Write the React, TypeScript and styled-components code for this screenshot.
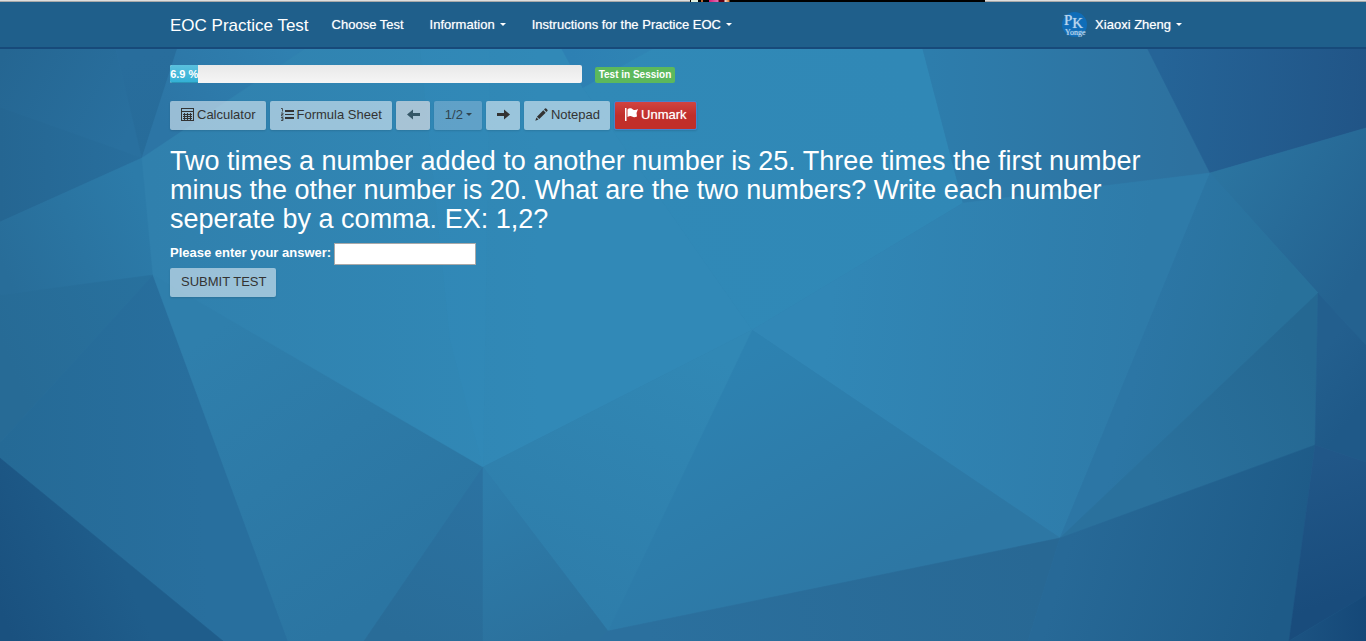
import React from 'react';
import styled, { createGlobalStyle, css } from 'styled-components';

const GlobalStyle = createGlobalStyle`
  *, *::before, *::after { box-sizing: border-box; }
  body {
    margin: 0;
    background: #2b76a5;
    color: #fff;
    font: 13px/18px "Liberation Sans", Arial, sans-serif;
  }
`;

const Page = styled.div`
  position: relative;
  isolation: isolate;
  min-height: 100vh;
`;

const Backdrop = styled.svg`
  position: absolute;
  inset: 0;
  z-index: -1;
  width: 100%;
  height: 100%;
`;

const TopEdge = styled.div`
  height: 2px;
  background: linear-gradient(#dedede 50%, #a9a9a9 50%);
`;

const TabStrip = styled.div`
  width: 295px;
  height: 2px;
  margin-left: 690px;
  background: linear-gradient(
    90deg,
    #000 1px, #dfeedd 1px, #dfeedd 8px, #000 8px, #000 11px, #b8662e 11px, #b8662e 13px,
    #000 13px, #000 19px, #d81b72 19px, #e56bb4 28px, #640010 29px, #640010 34px,
    #f4e6e0 35px, #e2762c 39px, #000 40px
  );
`;

const Navbar = styled.header`
  background: #1f5f8b;
  border-bottom: 2px solid #174a7a;
`;

const Container = styled.div`
  max-width: 1026px;
  margin: 0 auto;
`;

const NavRow = styled(Container)`
  display: flex;
  align-items: center;
  height: 45px;
`;

const NavLink = styled.a`
  display: flex;
  align-items: center;
  gap: 5px;
  margin-right: 26px;
  color: #fff;
  text-decoration: none;
  white-space: nowrap;
  text-shadow: 0 0 1px rgba(255, 255, 255, 0.6);
`;

const Brand = styled(NavLink)`
  margin-right: 23px;
  padding-top: 2px;
  font-size: 17px;
  line-height: 20px;
  text-shadow: none;
`;

const UserLink = styled(NavLink)`
  margin-left: auto;
  margin-right: 14px;
`;

const Avatar = styled.svg`
  width: 25px;
  height: 25px;
  margin-right: 3px;
`;

const Caret = styled.span`
  border: 3px solid transparent;
  border-top-color: currentColor;
  border-bottom: 0;
`;

const Main = styled(Container).attrs({ as: 'main' })`
  padding-top: 16px;
`;

const StatusRow = styled.div`
  display: flex;
  align-items: flex-start;
  gap: 13px;
  margin-bottom: 18px;
`;

const Progress = styled.div`
  width: 412px;
  height: 18px;
  border-radius: 2px;
  overflow: hidden;
  background: linear-gradient(#e9e9e9, #f5f5f5);
`;

const ProgressFill = styled.div`
  height: 100%;
  background: linear-gradient(#5bc0de, #31b0d5);
  box-shadow: inset 0 -1px 0 rgba(0, 0, 0, 0.15);
  font-size: 11px;
  font-weight: bold;
  text-align: center;
  white-space: nowrap;
`;

const StatusLabel = styled.span`
  width: 80px;
  height: 16px;
  margin-top: 2px;
  border-radius: 2px;
  background: #5cb85c;
  font: bold 10px/16px "Liberation Sans", Arial, sans-serif;
  text-align: center;
  white-space: nowrap;
`;

const Toolbar = styled.div`
  display: flex;
  flex-wrap: wrap;
  gap: 4px;
  margin-bottom: 17px;
`;

type Tone = 'light' | 'muted' | 'dim' | 'danger';

const tones = {
  light: css`background: rgba(238, 245, 250, 0.56); color: #333;`,
  muted: css`background: rgba(225, 225, 230, 0.67); color: #355767;`,
  dim: css`background: rgba(180, 205, 230, 0.36); color: #30444f;`,
  danger: css`
    border-color: #4a80cc;
    background: linear-gradient(#d14340, #c12e2a 50%) padding-box;
    color: #fff;
    text-shadow: 0 0 1px rgba(255, 255, 255, 0.6);
  `,
};

const Button = styled.button<{ $tone?: Tone }>`
  display: inline-flex;
  align-items: center;
  gap: 3px;
  height: 29px;
  padding: 0 9px 2px 10px;
  border: 1px solid transparent;
  border-radius: 2px;
  box-shadow: 0 1px 2px rgba(0, 0, 0, 0.12);
  font: inherit;
  white-space: nowrap;
  cursor: pointer;
  ${({ $tone = 'light' }) => tones[$tone]}
`;

const Icon = styled.svg`
  width: 13px;
  height: 13px;
  fill: currentColor;
`;

const Question = styled.h1`
  margin: 0 0 9px;
  font-size: 27px;
  font-weight: normal;
  line-height: 29px;
`;

const AnswerRow = styled.div`
  display: flex;
  gap: 3px;
  margin-bottom: 3px;
`;

const AnswerLabel = styled.label`
  font-weight: bold;
  line-height: 20px;
`;

const AnswerInput = styled.input`
  width: 142px;
  height: 22px;
  padding: 1px 2px;
  border: 1px solid #a9a9a9;
  background: #fff;
  color: #333;
  font: inherit;
`;

type Stop = [number, number, string];
type Facet = { points: string; from: Stop; to: Stop };

const facets: Facet[] = [
  { points: '0,0 104,0 142,158 0,107', from: [0, 60, '#256692'], to: [130, 130, '#29709f'] },
  { points: '104,0 193,0 142,158', from: [120, 60, '#286d9c'], to: [142, 158, '#276c9a'] },
  { points: '193,0 378,0 142,158', from: [160, 120, '#2c75a5'], to: [290, 50, '#2f80b0'] },
  { points: '0,107 142,158 0,222', from: [0, 160, '#256692'], to: [142, 158, '#286f9e'] },
  { points: '0,222 142,158 153,275 0,295', from: [0, 260, '#286d99'], to: [145, 200, '#2c7ba9'] },
  { points: '0,295 153,275 0,443', from: [0, 340, '#276b96'], to: [150, 280, '#28719e'] },
  { points: '153,275 288,641 223,641 0,458 0,443', from: [0, 450, '#256a96'], to: [200, 440, '#286f9e'] },
  { points: '153,275 483,467 364,641 288,641', from: [200, 340, '#2f7fac'], to: [380, 600, '#2b75a2'] },
  { points: '0,458 223,641 0,641', from: [0, 610, '#1a517f'], to: [120, 560, '#1f5d8b'] },
  { points: '142,158 378,0 545,0 583,88 752,330 483,467 153,275', from: [150, 230, '#3080ad'], to: [540, 230, '#3189b7'] },
  { points: '535,0 740,0 583,88', from: [570, 50, '#2d80b3'], to: [640, 50, '#2f84b4'] },
  { points: '740,0 910,0 963,203 752,330 583,88', from: [640, 230, '#3089b7'], to: [920, 100, '#3088b6'] },
  { points: '910,0 1123,0 1210,173 963,203', from: [930, 150, '#2d7dac'], to: [1190, 150, '#2d719f'] },
  { points: '1123,0 1366,0 1366,128 1210,173', from: [1160, 70, '#256497'], to: [1366, 90, '#215587'] },
  { points: '1210,173 1366,128 1366,345 1318,293', from: [1220, 170, '#2b74a0'], to: [1366, 260, '#246290'] },
  { points: '963,203 1210,173 1060,538 752,330', from: [830, 300, '#3187b6'], to: [1140, 330, '#2e7ba9'] },
  { points: '1210,173 1318,293 1060,538', from: [1160, 270, '#2c76a5'], to: [1280, 300, '#28719b'] },
  { points: '1318,293 1315,445 1060,538', from: [1140, 450, '#2a719d'], to: [1318, 380, '#256892'] },
  { points: '1318,293 1366,345 1366,462 1315,445', from: [1316, 360, '#235f8e'], to: [1366, 400, '#1f5988'] },
  { points: '752,330 1060,538 608,631', from: [750, 350, '#2d82b1'], to: [880, 580, '#2d77a4'] },
  { points: '752,330 608,631 483,467', from: [720, 360, '#3188b5'], to: [600, 620, '#2e7daa'] },
  { points: '483,467 483,641 364,641', from: [480, 480, '#2b72a1'], to: [410, 640, '#296c98'] },
  { points: '483,467 608,631 598,641 483,641', from: [490, 480, '#2e7dab'], to: [560, 640, '#2b719d'] },
  { points: '608,631 1060,538 1028,641 598,641', from: [650, 640, '#2b709e'], to: [1040, 590, '#286894'] },
  { points: '1060,538 1315,445 1289,641 1028,641', from: [1070, 540, '#276997'], to: [1280, 600, '#1e5b88'] },
  { points: '1315,445 1366,462 1366,595 1289,641', from: [1320, 460, '#215788'], to: [1366, 590, '#194c7c'] },
  { points: '1366,595 1366,641 1289,641', from: [1300, 640, '#1b5281'], to: [1366, 640, '#154878'] },
];

const PolygonBackdrop = () => (
  <Backdrop viewBox="0 0 1366 641" preserveAspectRatio="xMidYMid slice" aria-hidden="true">
    <defs>
      {facets.map(({ from, to }, i) => (
        <linearGradient
          key={i}
          id={`facet-${i}`}
          gradientUnits="userSpaceOnUse"
          x1={from[0]}
          y1={from[1]}
          x2={to[0]}
          y2={to[1]}
        >
          <stop stopColor={from[2]} />
          <stop offset="1" stopColor={to[2]} />
        </linearGradient>
      ))}
    </defs>
    {facets.map(({ points }, i) => (
      <polygon key={i} points={points} fill={`url(#facet-${i})`} stroke={`url(#facet-${i})`} strokeWidth="0.5" />
    ))}
    <path d="M483 467 450 340 420 49 490 49Z" fill="#3597c5" opacity="0.12" />
  </Backdrop>
);

const CalculatorIcon = () => (
  <Icon viewBox="0 0 13 13" aria-hidden="true">
    <path
      fillRule="evenodd"
      d="M0 0h13v13H0zM1 1v2h11V1zM1 4v8h11V4z"
    />
    <path d="M2 6h9v1H2zM2 8h9v1H2zM2 10h9v1H2zM3 5h1v7H3zM6 5h1v7H6zM9 5h1v7H9z" />
  </Icon>
);

const ListIcon = () => (
  <Icon viewBox="0 0 13 13" aria-hidden="true">
    <path d="M4 2h9v2H4zM4 6h9v1H4zM4 9h9v2H4z" />
    <path
      d="M0 .5h1.500v3M0 5h2v1.500H.5V8H2.500M0 9.500h2v3H0M.5 11H2"
      fill="none"
      stroke="currentColor"
      strokeWidth="0.800"
    />
  </Icon>
);

const ArrowLeftIcon = () => (
  <Icon viewBox="0 0 13 13" aria-hidden="true">
    <path d="M0 6.500 6 1.500V5h7v3H6v3.500z" />
  </Icon>
);

const ArrowRightIcon = () => (
  <Icon viewBox="0 0 13 13" aria-hidden="true">
    <path d="M13 6.500 7 1.500V5H0v3h7v3.500z" />
  </Icon>
);

const PencilIcon = () => (
  <Icon viewBox="0 0 13 13" aria-hidden="true">
    <path d="M10 .6q.6-.6 1.200 0l1.200 1.200q.6.600 0 1.200l-1 1L9 1.600zM8.300 2.300l2.400 2.400-6.400 6.400-2.400-2.400zM1.400 9.500l2.100 2.100L.3 12.700z" />
  </Icon>
);

const FlagIcon = () => (
  <Icon viewBox="0 0 13 13" aria-hidden="true">
    <path d="M0 0h1.500v13H0zM2.500 1.500C5-.5 6.500.5 8 1.500s3 .5 5-.5L11.500 5l.5 3.500c-2 1-3.500 1-5 .1s-2.500-.6-4.500.4z" />
  </Icon>
);

const UserAvatar = () => (
  <Avatar viewBox="0 0 25 25" aria-hidden="true">
    <circle cx="12.500" cy="12.500" r="12.500" fill="#0f6db8" />
    <g fill="#b9d6ec" fontFamily="Liberation Serif, serif">
      <text x="2" y="13" fontSize="15">
        P<tspan dy="3">K</tspan>
      </text>
      <text x="3" y="23" fontSize="8">Yonge</text>
    </g>
  </Avatar>
);

const progress = 6.9;

export default function App() {
  return (
    <Page>
      <GlobalStyle />
      <PolygonBackdrop />
      <TopEdge>
        <TabStrip />
      </TopEdge>
      <Navbar>
        <NavRow as="nav">
          <Brand href="#">EOC Practice Test</Brand>
          <NavLink href="#">Choose Test</NavLink>
          <NavLink href="#">Information <Caret /></NavLink>
          <NavLink href="#">Instructions for the Practice EOC <Caret /></NavLink>
          <UserLink href="#">
            <UserAvatar />
            Xiaoxi Zheng <Caret />
          </UserLink>
        </NavRow>
      </Navbar>
      <Main>
        <StatusRow>
          <Progress role="progressbar" aria-valuenow={progress} aria-label="Test progress">
            <ProgressFill style={{ width: `${progress}%` }}>{progress} %</ProgressFill>
          </Progress>
          <StatusLabel>Test in Session</StatusLabel>
        </StatusRow>
        <Toolbar>
          <Button type="button"><CalculatorIcon />Calculator</Button>
          <Button type="button"><ListIcon />Formula Sheet</Button>
          <Button type="button" $tone="muted" aria-label="Previous question"><ArrowLeftIcon /></Button>
          <Button type="button" $tone="dim">1/2 <Caret /></Button>
          <Button type="button" aria-label="Next question"><ArrowRightIcon /></Button>
          <Button type="button"><PencilIcon />Notepad</Button>
          <Button type="button" $tone="danger"><FlagIcon />Unmark</Button>
        </Toolbar>
        <Question>
          Two times a number added to another number is 25. Three times the first number minus the
          other number is 20. What are the two numbers? Write each number seperate by a comma. EX:
          1,2?
        </Question>
        <AnswerRow>
          <AnswerLabel htmlFor="answer">Please enter your answer:</AnswerLabel>
          <AnswerInput id="answer" type="text" />
        </AnswerRow>
        <Button type="submit">SUBMIT TEST</Button>
      </Main>
    </Page>
  );
}
